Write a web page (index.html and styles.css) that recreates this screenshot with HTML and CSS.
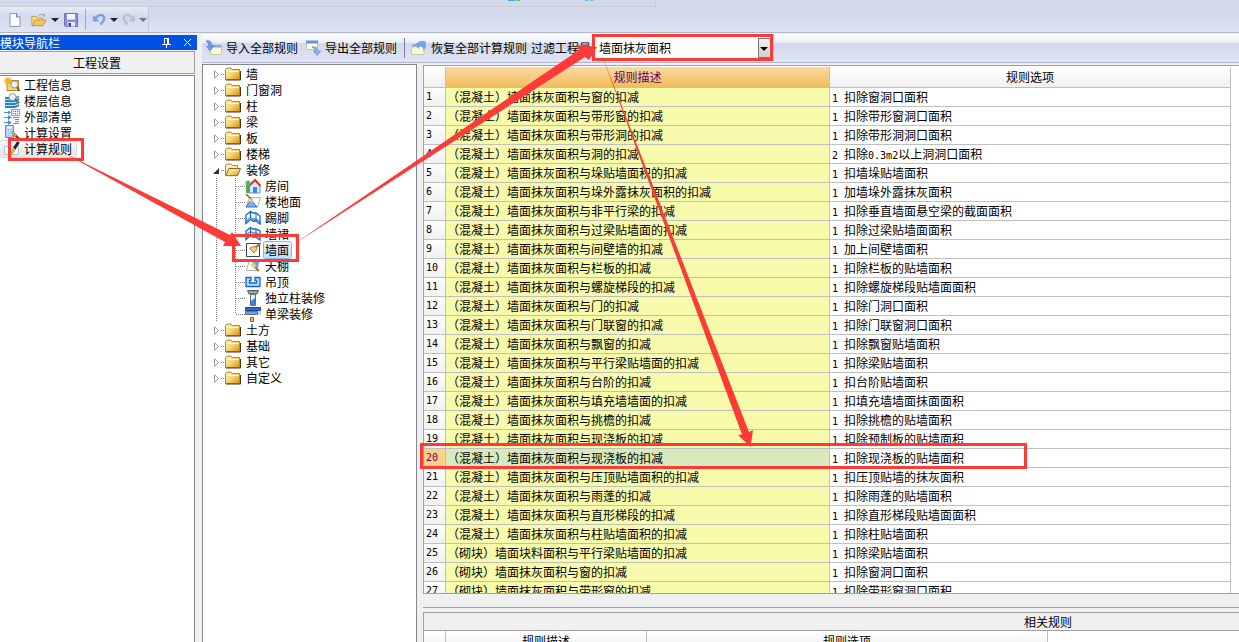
FILE: index.html
```html
<!DOCTYPE html>
<html lang="zh-CN">
<head>
<meta charset="utf-8">
<title>工程设置 - 计算规则</title>
<link rel="stylesheet" href="styles.css">
</head>
<body>
<svg class="defs" aria-hidden="true">
  <defs>
    <linearGradient id="gold" x1="0" y1="0" x2="1" y2="1"><stop offset="0" stop-color="#fff3b8"/><stop offset=".5" stop-color="#f6d676"/><stop offset="1" stop-color="#d99412"/></linearGradient>
    <symbol id="folder" viewBox="0 0 16 14"><path d="M.5 12.500V2.500L2 1h4l1.500 1.500h7v10z" fill="url(#gold)" stroke="#a08a5c"/><path d="M1 13h14.500V4" fill="none" stroke="#4a3510"/><path d="M2 4.500h12" stroke="#fffbe0"/></symbol>
    <symbol id="folder-open" viewBox="0 0 16 14"><path d="M.5 12.500V2.500L2 1h4l1.500 1.500h5V5" fill="#fdeeb0" stroke="#a08a5c"/><path d="M.8 12.700 4 5.500h11.500l-3 7.200z" fill="url(#gold)" stroke="#8a6a2a"/></symbol>
    <symbol id="import" viewBox="0 0 16 16"><path d="M4.500 6.500h11v8h-11z" fill="#fcfad6" stroke="#c6c8a8"/><path d="M5 5h10.500v2.500H5z" fill="#7fa8e8"/><path d="M0 1c4-1 6 1 5.800 5H8l-4 5L.5 6.500h2C3 4 2 2.500 0 1z" fill="#6c9cea" stroke="#4c78c8" stroke-width=".6"/></symbol>
    <symbol id="export" viewBox="0 0 16 16"><path d="M1.500 1.500h11v8h-11z" fill="#fcfad6" stroke="#c6c8a8"/><path d="M1 .5h12v3H1z" fill="#6c95dc"/><path d="M7 7c4-.5 6 1 5.800 4h2.700L12 15.500 8.500 11h2c0-2-1.500-3-3.500-4z" fill="#8eb4f4" stroke="#4c78c8" stroke-width=".6"/></symbol>
  </defs>
</svg>

<header class="topbar">
  <div class="menustrip">
    <svg class="scrap" viewBox="0 0 90 2" aria-hidden="true"><path d="M0 0h7v1H0z" fill="#4f9fd8"/><path d="M8 0h4v1H8z" fill="#79b95c"/><path d="M77 0h3v1h-3zM82 0h3v1h-3z" fill="#6bb8e8"/></svg>
  </div>
  <div class="toolbar">
    <button class="tool" aria-label="新建"><svg width="16" height="16" viewBox="0 0 16 16"><path d="M3 1.500h6.500L13 5v9.500H3z" fill="#fafcff" stroke="#8b9cad"/><path d="M9.500 1.500V5H13" fill="#dfe9f4" stroke="#6e7f91"/></svg></button>
    <button class="tool" aria-label="打开"><svg width="16" height="16" viewBox="0 0 18 16"><path d="M1 14V4h5l1 2h6v8z" fill="#f8dc86" stroke="#b9995a"/><path d="M1.500 14.500 4.500 8H17l-3.500 6.500z" fill="#f3c45c" stroke="#c09548"/><path d="M9 3c2-2 4-2 6 0V1.500M15 3.500h-2" fill="none" stroke="#7f99bb"/></svg></button>
    <i class="caret"></i>
    <button class="tool" aria-label="保存"><svg width="16" height="16" viewBox="0 0 16 16"><path d="M1.500 1.500h13v13h-12l-1-1z" fill="#8b90dc" stroke="#6c72c4"/><path d="M4 2h8v5.500H4z" fill="#f4f7ff"/><path d="M4.500 10h7.500v4.500H4.500z" fill="#e4e9f6"/><path d="M5.500 11h2.500v3.500H5.500z" fill="#3a4494"/></svg></button>
    <i class="divider"></i>
    <button class="tool" aria-label="撤销"><svg width="15" height="15" viewBox="0 0 15 15"><path d="M3.500 6.500C5 3 10.500 1.500 12 5c1 3-1 5-3.500 7.500" fill="none" stroke="#7ca0dc" stroke-width="2.500"/><path d="M1 3v6.500h6.500z" fill="#7ca0dc"/></svg></button>
    <i class="caret"></i>
    <button class="tool" aria-label="重做"><svg width="15" height="15" viewBox="0 0 15 15"><path d="M11.500 6.500C10 3 4.500 1.500 3 5c-1 3 1 5 3.500 7.500" fill="none" stroke="#b9c1cf" stroke-width="2.500"/><path d="M14 3v6.500H7.500z" fill="#b9c1cf"/></svg></button>
    <i class="caret dim"></i>
  </div>
</header>

<div class="workspace">
  <aside class="nav">
    <div class="nav-title"><span>模块导航栏</span>
      <button aria-label="固定"><svg width="9" height="10" viewBox="0 0 9 10"><path d="M2.500 0v6M6.500 0v6M2 .5h5M0 6.500h9M4.500 7v3M5.500 1v5" stroke="#fff" fill="none"/></svg></button>
      <button aria-label="关闭"><svg width="9" height="9" viewBox="0 0 9 9"><path d="M1 1l7 7M8 1 1 8" stroke="#fff"/></svg></button>
    </div>
    <button class="nav-group">工程设置</button>
    <ul class="nav-list">
      <li><a href="#info"><svg viewBox="0 0 16 16"><path d="M3 3.500h11.500v10H3z" fill="#f8d468" stroke="#b98628"/><path d="M4 0v8M0 4h8M1 1l6 6M7 1 1 7" stroke="#f2b51c" stroke-width="1.500"/><circle cx="10.500" cy="7.500" r="3.500" fill="#e5f3ff" stroke="#8f98a8"/><path d="m13 10 2.500 4" stroke="#775a2b" stroke-width="2"/></svg>工程信息</a></li>
      <li><a href="#floors"><svg viewBox="0 0 16 16"><path d="M1 5h10l4-1M1 8h10l4-2M1 11h10l4-2M1 14h10l4-2" fill="none" stroke="#2484cc" stroke-width="2"/><path d="M1 6.500h10l4-2M1 9.500h10l4-2M1 12.500h10l4-2" fill="none" stroke="#b8e0ff"/><circle cx="8.500" cy="4" r="3.500" fill="#e8f4ff" stroke="#8f98a8"/><path d="m11 6 4 4" stroke="#806a4a" stroke-width="2"/></svg>楼层信息</a></li>
      <li><a href="#lists"><svg viewBox="0 0 16 16"><path d="M7.500.5h8v6h-8z" fill="#f2f5ff" stroke="#8a9ac0"/><path d="M9 2.500h5M9 4.500h5" stroke="#5b6f9c" stroke-dasharray="1 1"/><path d="M0 3.500h5M0 8.500h5M0 13.500h5" stroke="#5286d8"/><path d="m4 1.500 3 2-3 2zM4 6l4 2.500L4 11zM4 11l4 2.500L4 16z" fill="#5286d8"/><path d="M9 8.500h6M11 10.500h4M11 12.500h4M9 14.500h6" stroke="#7a8396"/></svg>外部清单</a></li>
      <li><a href="#calc"><svg viewBox="0 0 16 16"><path d="M1.500.5h8v12h-8z" fill="#a9c9f5" stroke="#6a8ecb"/><path d="M3 2.500h5" stroke="#fff" stroke-width="2"/><path d="M3 5.500h5M3 7.500h5M3 9.500h5" stroke="#fff" stroke-dasharray="1 1"/><path d="m8 7 7 7" stroke="#6b4a15" stroke-width="2.500"/><path d="m7 6 5 5" stroke="#e7c869" stroke-width="1.500"/></svg>计算设置</a></li>
      <li><a href="#rules" class="current" aria-current="page"><svg viewBox="0 0 16 16"><path d="M.5 5.500h14v8H.500z" fill="#f8fafc" stroke="#b6c1cd"/><path d="M6 6v7" stroke="#b6c1cd"/><path d="M14.500 1 10 8" stroke="#25221f" stroke-width="3"/><path d="m10.500 7.500-3.500 6" stroke="#d9aa4e" stroke-width="3"/></svg>计算规则</a></li>
    </ul>
  </aside>

  <main class="content">
    <div class="rulebar">
      <div class="rulebar-tools">
        <button class="action"><svg><use href="#import"/></svg>导入全部规则</button>
        <button class="action"><svg><use href="#export"/></svg>导出全部规则</button>
        <i class="divider"></i>
        <button class="action last"><svg viewBox="0 0 16 16"><path d="M.5 8.500 3 6.500h10v8H.500z" fill="#fcfad6" stroke="#c6c8a8"/><path d="M9 1h5c2 4 1 7-1.500 10 0-3-.5-4.500-4.500-4.500V9L3.500 5 8 1.500V3z" fill="#79a3e8"/><path d="M1 5.500h5" stroke="#79a3e8" stroke-width="2"/></svg>恢复全部计算规则</button>
        <label class="filter-label" for="filter">过滤工程量</label>
        <div class="combo"><select id="filter"><option>墙面抹灰面积</option></select><i class="combo-arrow"></i></div>
      </div>
    </div>
    <div class="panes">
      <nav class="tree" aria-label="构件">
        <ul id="tree"></ul>
      </nav>
      <section class="tables">
        <div class="rules-pane">
          <table class="rules">
            <colgroup><col class="c-num"><col class="c-desc"><col class="c-opt"></colgroup>
            <thead><tr><th></th><th class="active">规则描述</th><th>规则选项</th></tr></thead>
            <tbody id="rules"></tbody>
          </table>
        </div>
        <div class="scroll-strip"></div>
        <div class="related">
          <div class="related-inner">
            <h2>相关规则</h2>
            <table class="related-table"><colgroup><col class="c-num"><col class="c-rdesc"><col class="c-ropt"></colgroup><thead><tr><th></th><th>规则描述</th><th>规则选项</th></tr></thead></table>
          </div>
        </div>
      </section>
    </div>
  </main>
</div>

<svg class="marks" width="1239" height="642" viewBox="0 0 1239 642" aria-hidden="true">
  <g fill="none" stroke="#fc3a36" stroke-width="3"><path d="M9.500 139.500h73v20h-73zM233.500 235.500h64v25h-64zM593.500 35.500h178v24h-178zM421.500 444.500h604v23h-604z"/></g>
  <g fill="#fc3a36"><path d="M63 152.500 230 235l2-3 9 14-18 0 2-4z"/><path d="M291 246 579 50l-3-5 21 2-8 13-4-3z"/><path d="M600 50 749 432l4-2-2.500 17L738 435l4-.5z"/></g>
</svg>
<script src="app.js"></script>
</body>
</html>
```

FILE: styles.css
```css
* { box-sizing: border-box; }
body {
  margin: 0;
  height: 100vh;
  display: flex;
  flex-direction: column;
  overflow: hidden;
  background: #f0f0f0;
  color: #000;
  font: 12px/16px "Noto Sans CJK SC", sans-serif;
}
button { font: inherit; color: inherit; border: 0; background: none; padding: 0; }
ul { list-style: none; margin: 0; padding: 0; }
a { color: inherit; text-decoration: none; }
svg { display: block; flex: none; }
.defs { position: absolute; width: 0; height: 0; }
.marks { position: absolute; top: 0; left: 0; pointer-events: none; }

.topbar { flex: none; height: 33px; background: linear-gradient(#d3d9ec 50%, #dfe5f5); border-bottom: 1px solid #b1b6cb; }
.menustrip { width: 656px; height: 7px; border: 1px solid #cbccd2; border-width: 0 1px 1px 0; padding-left: 508px; }
.scrap { width: 90px; height: 2px; }
.toolbar { display: flex; align-items: center; width: 149px; height: 25px; padding-left: 7px; border-right: 1px solid #c3c8d6; background: linear-gradient(#e6ebf6, #d3d9ec 40%, #dfe5f5); }
.tool { display: flex; margin-right: 4px; }
.caret { width: 0; border: 4px solid transparent; border-top-color: #222; border-bottom: 0; margin-right: 3px; }
.caret.dim { border-top-color: #777; margin: 0; }
.toolbar .tool:nth-of-type(2) { margin-left: 4px; }
.toolbar .tool:nth-of-type(3) { margin-left: 1px; }
.divider { width: 1px; align-self: stretch; margin: 2px 6px; background: #7c8190; }
.toolbar .divider { margin-left: 2px; background: #a3a8b6; }
.toolbar .divider ~ .tool { margin-right: 3px; }

.workspace { flex: 1; min-height: 0; display: flex; }
.nav { flex: none; width: 197px; display: flex; flex-direction: column; padding-top: 2px; }
.nav-title { display: flex; align-items: center; gap: 12px; height: 15px; padding-right: 5px; background: #0052e4; color: #fff; }
.nav-title span { flex: 1; }
.nav-group { height: 23px; margin: 1px 2px 1px 0; border: 1px solid #a0a0a0; border-left: 0; background: #f0f0f0; }
.nav-list { flex: 1; margin-right: 2px; padding-top: 1px; background: #fff; border: 1px solid #828790; border-width: 1px 1px 0 0; }
.nav-list a { display: flex; width: max-content; align-items: center; gap: 4px; height: 16px; padding: 0 4px; }
.nav-list svg { width: 16px; height: 16px; }
.nav-list .current { background: linear-gradient(#f8f8f8, #e5e5e5); border-radius: 3px; box-shadow: 0 0 0 1px #d9d9d9; }

.content { flex: 1; min-width: 0; margin-left: 5px; display: flex; flex-direction: column; }
.rulebar { flex: none; height: 30px; background: linear-gradient(#fff, #e6ecf5 33%, #d3d9ec 34%, #dfe5f5); border-top: 1px solid #f4f6fa; border-bottom: 1px solid #b1b6cb; }
.rulebar-tools { display: flex; align-items: center; width: 572px; height: 28px; padding: 0 3px 0 4px; border-right: 1px solid #c3c8d6; }
.action { display: flex; align-items: center; gap: 4px; margin-right: 7px; white-space: nowrap; }
.action.last { margin-right: 4px; }
.action svg { width: 16px; height: 16px; }
.rulebar .divider { margin: 4px 6px 4px 0; }
.filter-label { white-space: nowrap; width: 64px; }
.combo { position: relative; flex: 1; height: 22px; }
.combo select { appearance: none; width: 100%; height: 22px; border: 0; border-radius: 0; padding: 0 4px; background: #fff; color: #000; font: inherit; }
.combo-arrow { position: absolute; top: 1px; right: 0; width: 12px; height: 20px; border: 1px solid #777; border-right-color: #ddd; background: linear-gradient(#f2f2f2, #cdcdcd); pointer-events: none; }
.combo-arrow::after { content: ""; position: absolute; left: 1px; top: 8px; border: 4px solid transparent; border-top-color: #000; border-bottom: 0; }

.panes { flex: 1; min-height: 0; display: flex; gap: 6px; padding-top: 1px; }
.tree { flex: none; width: 215px; overflow: hidden; background: #fff; border: 1px solid #828790; border-bottom: 0; padding: 1px 0 0 10px; }
.tree ul ul { margin-left: 19px; }
.row { display: flex; align-items: center; height: 16px; }
.row::before { content: ""; flex: none; order: 1; width: 3px; border-top: 1px dotted #808080; }
.row svg { order: 2; width: 16px; height: 14px; margin: 0 5px 0 1px; }
.row b { order: 3; font-weight: normal; white-space: nowrap; }
.row .twist { order: 0; width: 8px; height: 9px; margin: 0; }
.branch { background: repeating-linear-gradient(#808080 0 1px, transparent 1px 2px) 3px 16px / 1px 144px no-repeat; }
.branch ul { background: repeating-linear-gradient(#808080 0 1px, transparent 1px 2px) 3px 0 / 1px 136px no-repeat; padding-left: 4px; }
.branch ul .row::before { width: 9px; }
.branch ul .row svg { width: 16px; height: 16px; margin: 0 3px 0 0; }
.branch ul .row b { padding: 0 1px; }
.branch ul .selected b { background: linear-gradient(#eaf3fd, #c2dcfb); box-shadow: 0 0 0 1px #8ab4e6; border-radius: 2px; padding-right: 2px; }

.tables { flex: 1; min-width: 0; display: flex; flex-direction: column; }
.rules-pane { flex: 1; min-height: 0; overflow: hidden; background: #fff; border: 1px solid #a0a0a8; border-right: 0; padding-top: 1px; margin-top: 1px; }
table { border-collapse: separate; border-spacing: 0; table-layout: fixed; }
.rules { width: calc(100% - 8px); }
.c-num { width: 22px; }
.c-desc { width: 384px; }
.c-rdesc { width: 201px; }
.c-ropt { width: 401px; }
th, td { height: 19px; padding: 0; border: 1px solid #bfbfbf; border-width: 0 1px 1px 0; font-weight: normal; white-space: nowrap; overflow: hidden; line-height: 16px; }
th { height: 21px; background: linear-gradient(#fff, #f0f0f0); }
th.active { background: linear-gradient(#fbd9a3, #f0bd5b); color: #60005c; }
td:first-child { padding-left: 2px; background: linear-gradient(#fdfdfd, #f1f1f1); font-family: "DejaVu Sans Mono", monospace; font-size: 10px; }
td:nth-child(2) { background: #f8faab; padding-left: 1px; }
td:nth-child(3) { padding-left: 2px; }
td span { font-family: "DejaVu Sans Mono", monospace; font-size: 10px; line-height: 12px; white-space: pre; }
.picked td:first-child { background: #ffcf87; color: #60005c; }
.picked td:nth-child(2) { background: #d8eabc; }
.scroll-strip { flex: none; height: 14px; border-bottom: 1px solid #a0a0a0; }
.related { flex: none; height: 30px; margin-top: 4px; overflow: hidden; border: 1px solid #a0a0a0; border-width: 1px 0 0 1px; background: #fff; }
.related-inner { width: max-content; min-width: 1248px; }
.related h2 { margin: 0; height: 18px; font-size: 12px; font-weight: normal; line-height: 17px; text-align: center; background: #f0f0f0; border-bottom: 1px solid #a0a0a0; }
.related-table { width: 624px; }
```

FILE: app.js
```js
const icons = {
  room: '<path d="M4 8 10 2l5 6v7H4z" fill="#dceaff" stroke="#5b8fdf"/><path d="M4.500 7.500 10 2l5.500 6" fill="none" stroke="#dc3228" stroke-width="2"/><path d="M8 9h4v6H8z" fill="#4785dc"/><path d="M1 5h4v10H1z" fill="#45ad54"/><circle cx="3" cy="5" r="2.500" fill="#52b960"/>',
  floor: '<path d="M4.500 3.500h11l-3 9h-11z" fill="#fff" stroke="#a7aebb"/><path d="m6 6 6 7H1z" fill="#7db5f8" stroke="#2c6fc8"/><path d="m1 0 6 6" stroke="#8d6b1c" stroke-width="1.500"/><path d="m5 4 4 3-4 2z" fill="#e8c760"/>',
  skirt: '<path d="M1 5 5.500 1.500v8L1 13.500zM5.500 1.500 8 3h3l4 3v8l-4-3H8L5.500 9.500" fill="#fff" stroke="#1168c8" stroke-width="1.300"/><path d="M1 11l4.500-3.500L8 9h3l4 3v2l-4-3H8L5.500 9.500 1 13.500z" fill="#8fc8fc" stroke="#1168c8"/><path d="M11 3v8" stroke="#1168c8"/>',
  dado: '<path d="M1 5 5.500 1.500 8 3h3l4 2v9l-4-3H8L5.500 9.500 1 13.500z" fill="#e6f3ff" stroke="#1168c8" stroke-width="1.300"/><path d="M5.500 1v8.500M11 3v8M1 9l4.500-3.500L8 7h3l4 2" fill="none" stroke="#1168c8"/>',
  wall: '<path d="M1.500 1.500h13v13h-13z" fill="#fff" stroke="#34405e"/><path d="M10 6 15.500 1" stroke="#9b7a24" stroke-width="2"/><path d="m5 6 5-2 2 3-3 4-4-4z" fill="#ead174" stroke="#a38435"/>',
  ceiling: '<path d="M4.500 1.500h10l-3 11h-10z" fill="#fff" stroke="#a7aebb"/><path d="M7 1h7l-1 9-5-2z" fill="#67a5f4"/><path d="m8 7 6 6" stroke="#9b7a24" stroke-width="2"/><path d="m5 6 5-1 1 4-3 1z" fill="#ead174"/>',
  drop: '<path d="M1 3.500h5v3H4.500V9h7V6.500H10v-3h5v9H1z" fill="#b8dcff" stroke="#1168c8" stroke-width="1.300"/>',
  column: '<path d="M2.500.5h11L12 4H4z" fill="#9aa1ab" stroke="#555b65"/><path d="M5.500 4.500h5v11h-5z" fill="#e8edf2" stroke="#626b79"/><path d="m6 11 4-3v7H6z" fill="#3c80d8"/>',
  beam: '<path d="M.5 1.500h15v3H.500z" fill="#2b6dc0" stroke="#1b4f94"/><path d="M.5 5.500h12v3H.500z" fill="#6f9fd6" stroke="#617087"/><path d="M13 5h3v4h-3z" fill="#c9d1db"/><path d="M5.500 11.500h3v4h-3z" fill="#e9b97c" stroke="#8f6128"/>'
};
const svg = body => `<svg viewBox="0 0 16 16">${body}</svg>`;
const closed = '<svg class="twist" viewBox="0 0 8 9"><path d="M1.500.8v7.400L5.500 4.500z" fill="#fff" stroke="#9a9a9a"/></svg>';
const opened = '<svg class="twist" viewBox="0 0 8 9"><path d="M6 2v6H0z" fill="#303030"/></svg>';
const folder = name => `<li><div class="row">${closed}<svg><use href="#folder"/></svg><b>${name}</b></div></li>`;
const parts = [['room', '房间'], ['floor', '楼地面'], ['skirt', '踢脚'], ['dado', '墙裙'], ['wall', '墙面'], ['ceiling', '天棚'], ['drop', '吊顶'], ['column', '独立柱装修'], ['beam', '单梁装修']];
document.getElementById('tree').innerHTML =
  ['墙', '门窗洞', '柱', '梁', '板', '楼梯'].map(folder).join('') +
  `<li class="branch"><div class="row">${opened}<svg><use href="#folder-open"/></svg><b>装修</b></div><ul>` +
  parts.map(([k, n]) => `<li><div class="row${k === 'wall' ? ' selected' : ''}">${svg(icons[k])}<b>${n}</b></div></li>`).join('') +
  '</ul></li>' + ['土方', '基础', '其它', '自定义'].map(folder).join('');

const concrete = [
  ['窗', '扣除窗洞口面积'], ['带形窗', '扣除带形窗洞口面积'], ['带形洞', '扣除带形洞洞口面积'],
  ['洞', '扣除<span>0.3m2</span>以上洞洞口面积', 2], ['垛贴墙面积', '扣墙垛贴墙面积'], ['垛外露抹灰面积', '加墙垛外露抹灰面积'],
  ['非平行梁', '扣除垂直墙面悬空梁的截面面积'], ['过梁贴墙面', '扣除过梁贴墙面面积'], ['间壁墙', '加上间壁墙面积'],
  ['栏板', '扣除栏板的贴墙面积'], ['螺旋梯段', '扣除螺旋梯段贴墙面面积'], ['门', '扣除门洞口面积'],
  ['门联窗', '扣除门联窗洞口面积'], ['飘窗', '扣除飘窗贴墙面积'], ['平行梁贴墙面', '扣除梁贴墙面积'],
  ['台阶', '扣台阶贴墙面积'], ['填充墙墙面', '扣填充墙墙面抹面面积'], ['挑檐', '扣除挑檐的贴墙面积'],
  ['现浇板', '扣除预制板的贴墙面积'], ['现浇板', '扣除现浇板的贴墙面积'], ['压顶贴墙面积', '扣压顶贴墙的抹灰面积'],
  ['雨蓬', '扣除雨蓬的贴墙面积'], ['直形梯段', '扣除直形梯段贴墙面面积'], ['柱贴墙面积', '扣除柱贴墙面积']
].map(([what, option, code = 1]) => [`（混凝土）墙面抹灰面积与${what}的扣减`, option, code]);
const rules = concrete.concat([
  ['（砌块）墙面块料面积与平行梁贴墙面的扣减', '扣除梁贴墙面积', 1],
  ['（砌块）墙面抹灰面积与窗的扣减', '扣除窗洞口面积', 1],
  ['（砌块）墙面抹灰面积与带形窗的扣减', '扣除带形窗洞口面积', 1]
]);
document.getElementById('rules').innerHTML = rules.map(([d, o, c], i) =>
  `<tr${i === 19 ? ' class="picked"' : ''}><td>${i + 1}</td><td>${d}</td><td><span>${c} </span>${o}</td></tr>`).join('');
```
